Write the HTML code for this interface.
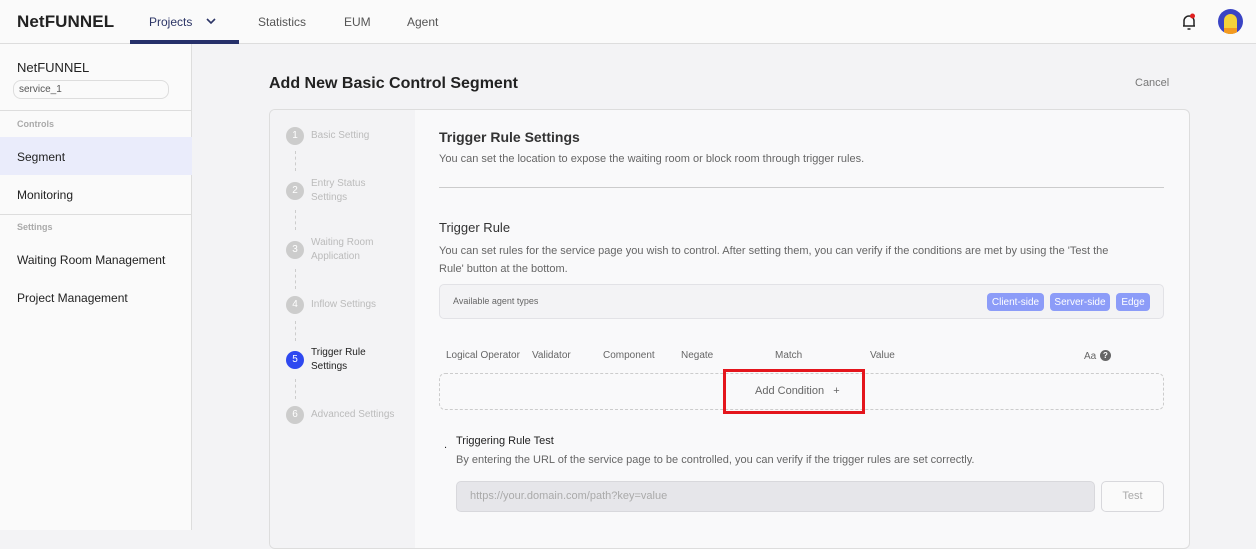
<!DOCTYPE html>
<html><head><style>
*{box-sizing:border-box;margin:0;padding:0}
body{width:1256px;height:530px;overflow:hidden;font-family:"Liberation Sans",sans-serif;background:#f3f3f5;position:relative;color:#222}
.a{position:absolute}
.top{left:0;top:0;width:1256px;height:44px;background:#fafafa;border-bottom:1px solid #ddd}
.side{left:0;top:44px;width:192px;height:486px;background:#fafafa;border-right:1px solid #ddd}
.t{position:absolute;white-space:nowrap}
.step{position:absolute;left:286px;width:18px;height:18px;border-radius:50%;background:#ccc;color:#fff;font-size:10px;text-align:center;line-height:18px}
.sl{position:absolute;left:311px;font-size:10px;color:#bbb;line-height:14px}
.dl{position:absolute;left:295px;width:0;border-left:1px dashed #ccc;height:20px}
.tag{position:absolute;top:293px;height:18px;background:#8c9cf8;color:#fff;font-size:10px;line-height:18px;text-align:center;border-radius:4px;padding-top:1px}
.hd{position:absolute;top:350px;font-size:10px;color:#666}
</style></head><body>
<div class="a top"></div>
<div class="t" style="left:17px;top:12px;font-size:17px;font-weight:bold;color:#222;letter-spacing:0.1px">NetFUNNEL</div>
<div class="t" style="left:149px;top:15px;font-size:12px;color:#2c3566">Projects</div>
<svg class="a" style="left:206px;top:17px" width="10" height="8"><path d="M1 2 L5 6 L9 2" stroke="#2c3566" stroke-width="1.6" fill="none"/></svg>
<div class="a" style="left:130px;top:40px;width:109px;height:4px;background:#26306a"></div>
<div class="t" style="left:258px;top:15px;font-size:12px;color:#555">Statistics</div>
<div class="t" style="left:344px;top:15px;font-size:12px;color:#555">EUM</div>
<div class="t" style="left:407px;top:15px;font-size:12px;color:#555">Agent</div>
<svg class="a" style="left:1180px;top:12px" width="18" height="20"><path d="M4 14 V9 A5 5 0 0 1 14 9 V14 H3 M15 14 H3 M7.5 17 H10.5" stroke="#222" stroke-width="1.5" fill="none"/><circle cx="12.5" cy="4" r="2.5" fill="#e02020"/></svg>
<div class="a" style="left:1218px;top:9px;width:25px;height:25px;border-radius:50%;background:#3a44c4;overflow:hidden"><div class="a" style="left:6px;top:5px;width:13px;height:20px;border-radius:7px 7px 0 0;background:#f4d33a"></div><div class="a" style="left:6px;top:19px;width:13px;height:6px;background:#f39a20"></div></div>

<div class="a side"></div>
<div class="t" style="left:17px;top:60px;font-size:13px;color:#222">NetFUNNEL</div>
<div class="a" style="left:13px;top:80px;width:156px;height:19px;border:1px solid #ddd;border-radius:8px;background:#fafafa;font-size:10px;color:#555;padding:3px 5px">service_1</div>
<div class="a" style="left:0;top:110px;width:192px;border-top:1px solid #ddd"></div>
<div class="t" style="left:17px;top:119px;font-size:9px;color:#aaa;font-weight:bold">Controls</div>
<div class="a" style="left:0;top:137px;width:192px;height:38px;background:#eaecfb"></div>
<div class="t" style="left:17px;top:150px;font-size:12px;color:#222">Segment</div>
<div class="t" style="left:17px;top:188px;font-size:12px;color:#222">Monitoring</div>
<div class="a" style="left:0;top:214px;width:192px;border-top:1px solid #ddd"></div>
<div class="t" style="left:17px;top:222px;font-size:9px;color:#aaa;font-weight:bold">Settings</div>
<div class="t" style="left:17px;top:253px;font-size:12px;color:#222">Waiting Room Management</div>
<div class="t" style="left:17px;top:291px;font-size:12px;color:#222">Project Management</div>

<div class="t" style="left:269px;top:75px;font-size:16px;font-weight:bold;color:#222">Add New Basic Control Segment</div>
<div class="t" style="left:1135px;top:77px;font-size:11px;color:#777">Cancel</div>

<div class="a" style="left:269px;top:109px;width:921px;height:440px;border:1px solid #ddd;border-radius:6px;background:#f9f9fa;overflow:hidden">
<div class="a" style="left:0;top:0;width:145px;height:440px;background:#f3f3f5"></div></div>

<div class="step" style="top:127px">1</div><div class="sl" style="top:129px">Basic Setting</div>
<div class="dl" style="top:151px"></div>
<div class="step" style="top:182px">2</div><div class="sl" style="top:177px">Entry Status<br>Settings</div>
<div class="dl" style="top:210px"></div>
<div class="step" style="top:241px">3</div><div class="sl" style="top:236px">Waiting Room<br>Application</div>
<div class="dl" style="top:269px"></div>
<div class="step" style="top:296px">4</div><div class="sl" style="top:298px">Inflow Settings</div>
<div class="dl" style="top:321px"></div>
<div class="step" style="top:351px;background:#2e48f0">5</div><div class="sl" style="top:346px;color:#222">Trigger Rule<br>Settings</div>
<div class="dl" style="top:379px"></div>
<div class="step" style="top:406px">6</div><div class="sl" style="top:408px">Advanced Settings</div>

<div class="t" style="left:439px;top:129px;font-size:14px;font-weight:bold;color:#333">Trigger Rule Settings</div>
<div class="t" style="left:439px;top:153px;font-size:11px;color:#666">You can set the location to expose the waiting room or block room through trigger rules.</div>
<div class="a" style="left:439px;top:187px;width:725px;border-top:1px solid #ccc"></div>
<div class="t" style="left:439px;top:220px;font-size:13px;color:#333">Trigger Rule</div>
<div class="t" style="left:439px;top:242px;font-size:11px;color:#666;line-height:18px">You can set rules for the service page you wish to control. After setting them, you can verify if the conditions are met by using the 'Test the<br>Rule' button at the bottom.</div>
<div class="a" style="left:439px;top:284px;width:725px;height:35px;border:1px solid #e2e2e6;border-radius:5px;background:#f3f3f5"></div>
<div class="t" style="left:453px;top:296px;font-size:9px;color:#666">Available agent types</div>
<div class="tag" style="left:987px;width:57px">Client-side</div>
<div class="tag" style="left:1050px;width:60px">Server-side</div>
<div class="tag" style="left:1116px;width:34px">Edge</div>

<div class="hd" style="left:446px">Logical Operator</div>
<div class="hd" style="left:532px">Validator</div>
<div class="hd" style="left:603px">Component</div>
<div class="hd" style="left:681px">Negate</div>
<div class="hd" style="left:775px">Match</div>
<div class="hd" style="left:870px">Value</div>
<div class="hd" style="left:1084px;top:351px">Aa</div>
<div class="a" style="left:1100px;top:350px;width:11px;height:11px;border-radius:50%;background:#666;color:#fff;font-size:8px;text-align:center;line-height:11px;font-weight:bold">?</div>

<div class="a" style="left:439px;top:373px;width:725px;height:37px;border:1px dashed #ccc;border-radius:6px"></div>
<div class="a" style="left:723px;top:369px;width:142px;height:45px;border:3px solid #e4151c"></div>
<div class="t" style="left:755px;top:385px;font-size:11px;color:#666">Add Condition &nbsp;&nbsp;+</div>

<div class="t" style="left:444px;top:439px;font-size:11px;color:#222">.</div>
<div class="t" style="left:456px;top:435px;font-size:11px;color:#222">Triggering Rule Test</div>
<div class="t" style="left:456px;top:454px;font-size:11px;color:#666">By entering the URL of the service page to be controlled, you can verify if the trigger rules are set correctly.</div>
<div class="a" style="left:456px;top:481px;width:639px;height:31px;border:1px solid #d8d8dc;border-radius:5px;background:#e6e6ea"></div>
<div class="t" style="left:470px;top:490px;font-size:11px;color:#aaa">https://your.domain.com/path?key=value</div>
<div class="a" style="left:1101px;top:481px;width:63px;height:31px;border:1px solid #d8d8dc;border-radius:5px;background:#fafafa;font-size:11px;color:#aaa;text-align:center;line-height:29px">Test</div>
</body></html>
